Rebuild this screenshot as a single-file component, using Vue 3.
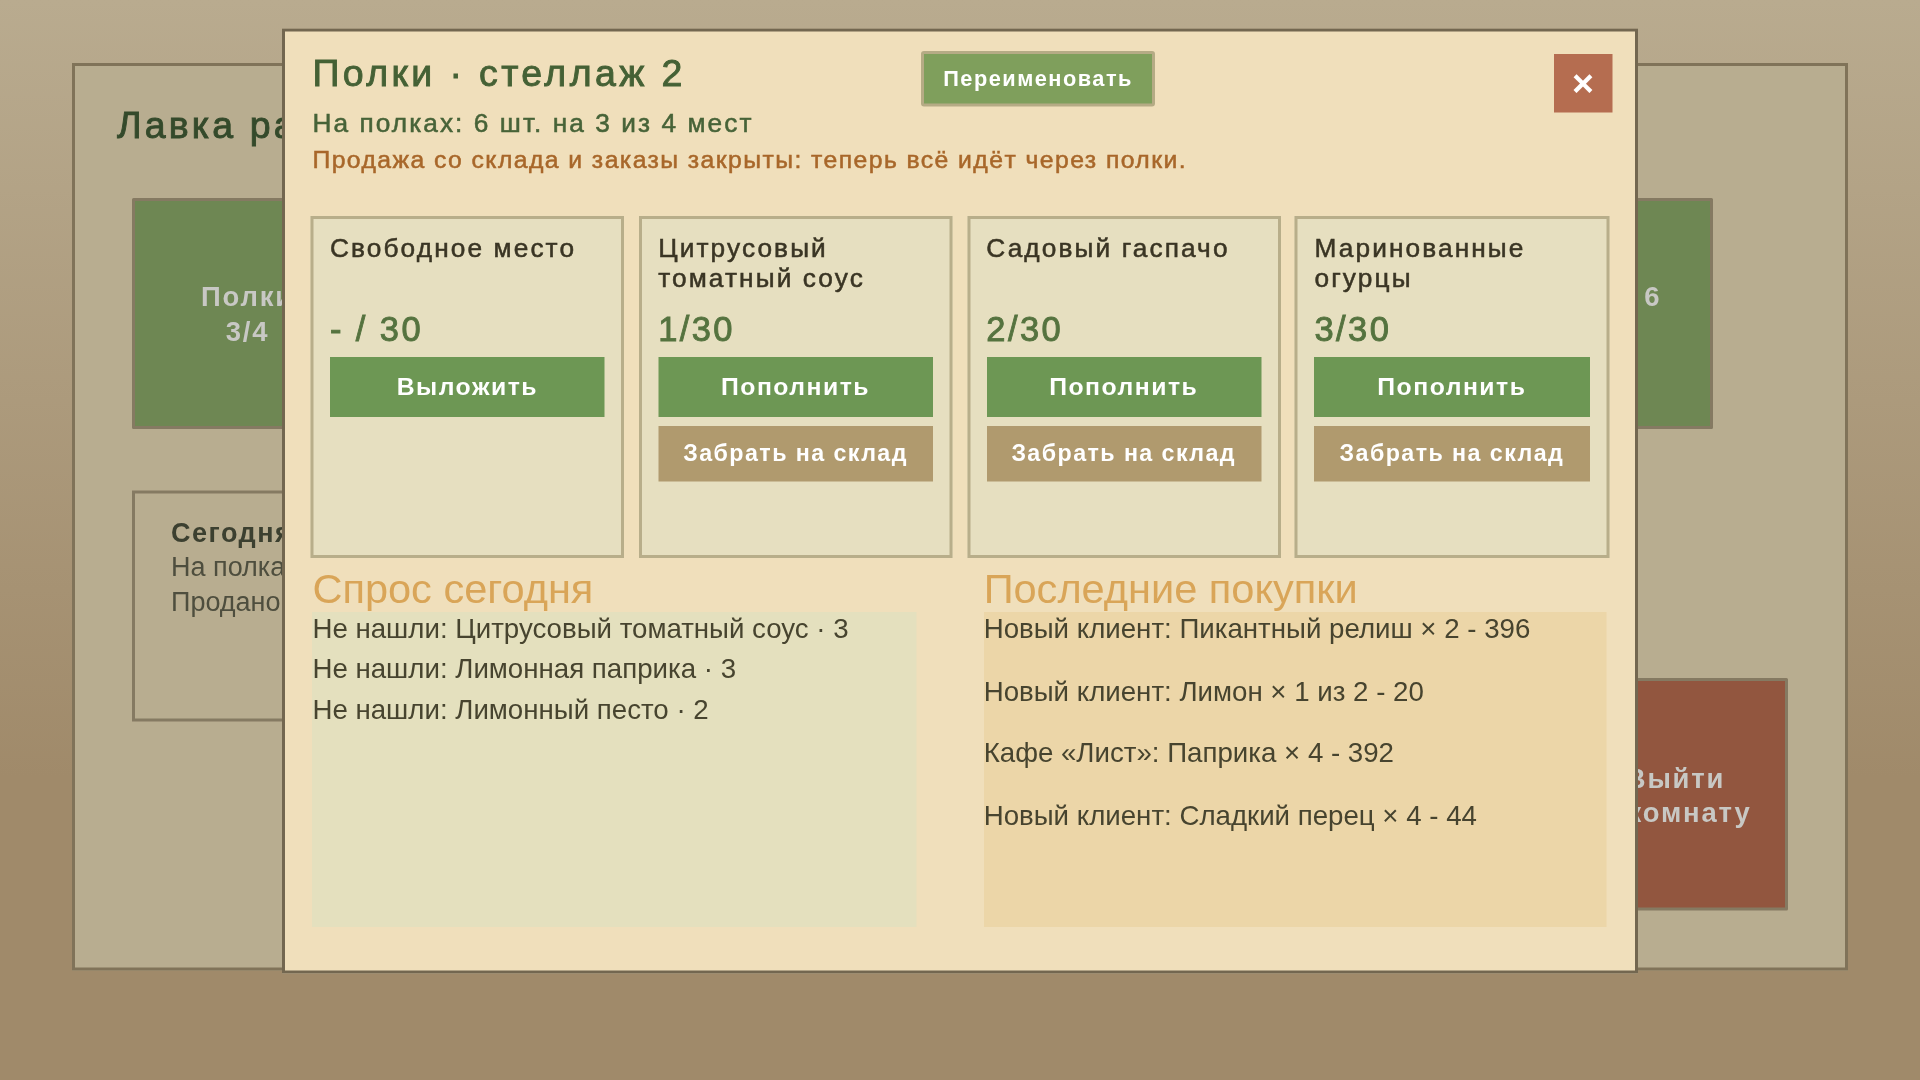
<script setup>
const slots = [
  { name: 'Свободное место', count: '- / 30', primary: 'Выложить', empty: true },
  { name: 'Цитрусовый томатный соус', count: '1/30', primary: 'Пополнить' },
  { name: 'Садовый гаспачо', count: '2/30', primary: 'Пополнить' },
  { name: 'Маринованные огурцы', count: '3/30', primary: 'Пополнить' },
]
const demand = [
  'Не нашли: Цитрусовый томатный соус · 3',
  'Не нашли: Лимонная паприка · 3',
  'Не нашли: Лимонный песто · 2',
]
const purchases = [
  'Новый клиент: Пикантный релиш × 2 - 396',
  'Новый клиент: Лимон × 1 из 2 - 20',
  'Кафе «Лист»: Паприка × 4 - 392',
  'Новый клиент: Сладкий перец × 4 - 44',
]
</script>

<template>
  <div class="stage">
    <div class="page">
      <main class="shop">
        <h1 class="shop-title">Лавка растений</h1>
        <div class="tiles">
          <div class="tile">Полки<br />3/4</div>
          <div class="tile tile-goods">Товары 6<br />шт.</div>
        </div>
        <div class="lower">
          <div class="today">
            <strong>Сегодня</strong>
            <div>На полках: 6</div>
            <div>Продано: 4</div>
          </div>
          <div class="tile exit">Выйти<br />в комнату</div>
        </div>
      </main>

      <section class="modal">
        <header class="head">
          <div class="head-main">
            <div class="title-row">
              <h2 class="title">Полки · стеллаж 2</h2>
              <button class="rename">Переименовать</button>
            </div>
            <p class="sub">На полках: 6 шт. на 3 из 4 мест</p>
            <p class="warn">Продажа со склада и заказы закрыты: теперь всё идёт через полки.</p>
          </div>
          <button class="close">×</button>
        </header>

        <div class="cards">
          <article v-for="s in slots" :key="s.name" class="card">
            <div class="name">{{ s.name }}</div>
            <div class="count">{{ s.count }}</div>
            <button class="btn-main">{{ s.primary }}</button>
            <button v-if="!s.empty" class="btn-back">Забрать на склад</button>
          </article>
        </div>

        <div class="columns">
          <div class="col col-demand">
            <h3 class="col-title">Спрос сегодня</h3>
            <div class="box box-demand">
              <div v-for="d in demand" :key="d" class="line">{{ d }}</div>
            </div>
          </div>
          <div class="col col-buys">
            <h3 class="col-title">Последние покупки</h3>
            <div class="box box-buys">
              <div v-for="p in purchases" :key="p" class="line">{{ p }}</div>
            </div>
          </div>
        </div>
      </section>
    </div>
  </div>
</template>

<style>
body { margin: 0; }
</style>

<style scoped>
* { box-sizing: border-box; }
.stage {
  width: 1920px;
  height: 1080px;
  overflow: hidden;
}
.page {
  position: relative;
  width: 1280px;
  height: 720px;
  transform: scale(1.5);
  transform-origin: 0 0;
  will-change: transform;
  padding: 42px 48px 0;
  background: linear-gradient(180deg, #b9ab8f 0%, #a08a6a 72%);
  font-family: "Liberation Sans", Arial, sans-serif;
}
.shop {
  width: 1184px;
  height: 605px;
  background: #b8ad90;
  border: 2px solid #807359;
  padding: 24px 28px 0;
}
.shop-title {
  margin: 0;
  font-size: 25px;
  line-height: 30px;
  letter-spacing: 2.1px;
  font-weight: 400;
  -webkit-text-stroke: 0.6px currentColor;
  color: #344a2b;
}
.tiles {
  margin-top: 34px;
  margin-left: 10px;
  width: 1054px;
  display: flex;
  justify-content: space-between;
}
.tile {
  width: 154px;
  height: 154px;
  background: #6e8753;
  border: 2px solid #857a62;
  border-radius: 1px;
  color: #c8c8c4;
  font-size: 18.3px;
  font-weight: 700;
  line-height: 23px;
  letter-spacing: 1.2px;
  text-align: center;
  display: flex;
  align-items: center;
  justify-content: center;
  padding-top: 0.5px;
}
.tile-goods { padding-right: 9px; }
.lower {
  margin-top: 41px;
  margin-left: 10px;
  width: 1104px;
  display: flex;
  justify-content: space-between;
  align-items: flex-start;
}
.today {
  width: 280px;
  height: 154px;
  border: 2px solid #857a62;
  padding: 15px 24px;
  font-size: 18px;
  line-height: 23px;
  color: #4e4e3e;
}
.today strong { display: block; color: #3c4030; letter-spacing: 1px; }
.exit {
  width: 150px;
  height: 155px;
  margin-top: 125px;
  background: #92563f;
}
.modal {
  position: absolute;
  left: 187.6px;
  top: 18.6px;
  width: 904.7px;
  height: 630.7px;
  background: #f0dfbb;
  border: 2px solid #736750;
  padding: 10.7px 17px 0 17.4px;
}
.head {
  display: flex;
  justify-content: space-between;
  align-items: flex-start;
  height: 113px;
}
.head-main { padding-left: 1.3px; }
.title-row {
  display: flex;
  align-items: flex-start;
  height: 40.4px;
}
.title {
  margin: 2px 0 0;
  width: 405px;
  font-size: 25px;
  line-height: 30px;
  letter-spacing: 2.26px;
  font-weight: 400;
  -webkit-text-stroke: 0.6px currentColor;
  color: #456135;
}
.rename {
  width: 156.5px;
  height: 37px;
  margin: 2.5px 0 0 0.5px;
  background: #7f9f5c;
  border: 2px solid #b5ab85;
  border-radius: 2px;
  color: #fff;
  font: 700 14.5px "Liberation Sans", Arial, sans-serif;
  letter-spacing: 1px;
  padding: 0 0 1px;
}
.sub {
  margin: 0;
  font-size: 17.5px;
  line-height: 20px;
  letter-spacing: 1.37px;
  -webkit-text-stroke: 0.35px currentColor;
  color: #476338;
}
.warn {
  margin: 5.2px 0 0;
  font-size: 16.5px;
  line-height: 19px;
  letter-spacing: 0.95px;
  -webkit-text-stroke: 0.35px currentColor;
  color: #a8672a;
}
.close {
  width: 38.7px;
  height: 38.7px;
  margin-top: 4.9px;
  margin-right: -1.4px;
  background: #b56d50;
  border: none;
  color: #fff;
  font: 700 25px "Liberation Sans", Arial, sans-serif;
  line-height: 36px;
  padding: 0 0 2px;
}
.cards {
  display: grid;
  grid-template-columns: repeat(4, 209.2px);
  column-gap: 9.6px;
}
.card {
  height: 228px;
  background: #e6dfc0;
  border: 2px solid #b8ae8a;
  padding: 8.8px 11px 0;
  display: flex;
  flex-direction: column;
}
.name {
  height: 41.3px;
  font-size: 17.5px;
  line-height: 20.4px;
  letter-spacing: 1.4px;
  -webkit-text-stroke: 0.35px currentColor;
  color: #3a3524;
}
.count {
  margin-top: 8.8px;
  height: 32.5px;
  font-size: 23px;
  line-height: 29px;
  letter-spacing: 1.6px;
  -webkit-text-stroke: 0.6px currentColor;
  color: #55733f;
}
.btn-main,
.btn-back {
  width: 100%;
  border: none;
  color: #fff;
  font-family: "Liberation Sans", Arial, sans-serif;
  padding: 0;
}
.btn-main {
  height: 40px;
  background: #6d9754;
  font-size: 16.5px;
  font-weight: 700;
  letter-spacing: 1px;
}
.btn-back {
  height: 37px;
  margin-top: 6px;
  background: #b09a6e;
  font-size: 15.5px;
  font-weight: 700;
  letter-spacing: 0.95px;
}
.columns {
  display: flex;
  padding-left: 1.3px;
  margin-top: 5px;
}
.col-demand { width: 447.5px; }
.col-buys { width: 415px; }
.col-title {
  margin: 0;
  height: 31px;
  font-size: 27.7px;
  line-height: 31px;
  font-weight: 400;
  color: #d9a558;
}
.box { height: 209.5px; }
.box-demand { width: 403px; background: #e4e0be; }
.box-buys { background: #ecd6a8; }
.line {
  font-size: 18.45px;
  line-height: 21px;
  color: #47442f;
}
.box-demand .line { margin-bottom: 6px; }
.box-buys .line { margin-bottom: 20.5px; }
</style>
